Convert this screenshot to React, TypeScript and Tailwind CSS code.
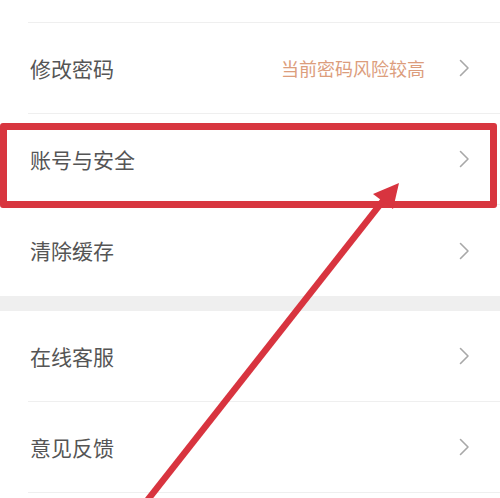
import React from 'react';

const font = { fontFamily: '"Noto Sans CJK SC", "Noto Sans", sans-serif' };

const Chevron = () => (
    <svg width="11" height="18" viewBox="0 0 11 18" fill="none" className="shrink-0">
        <path d="M1.5 1.5 L9 9 L1.5 16.5" stroke="#a8a8a8" strokeWidth="1.6" strokeLinecap="round" strokeLinejoin="round" />
    </svg>
);

const Divider = () => <div className="h-px ml-[28px] bg-[#efefef]" />;

interface RowProps {
    label: string;
    hint?: string;
    divider?: boolean;
}

const Row: React.FC<RowProps> = ({ label, hint, divider = true }) => (
    <div className="flex flex-col">
        <div className={`${divider ? 'h-[90px]' : 'h-[91px]'} flex items-center pl-[30px] pr-[30px]`}>
            <span className="text-[21px] text-[#555555] flex-1 leading-none">{label}</span>
            {hint && <span className="text-[18px] text-[#dc9d7c] mr-[34px] leading-none">{hint}</span>}
            <Chevron />
        </div>
        {divider && <Divider />}
    </div>
);

export default function App() {
    return (
        <div className="relative w-[500px] h-[498px] overflow-hidden bg-white" style={font}>
            <div className="flex flex-col">
                <div className="h-[22px]" />
                <Divider />
                <Row label="修改密码" hint="当前密码风险较高" />
                <Row label="账号与安全" />
                <Row label="清除缓存" divider={false} />
                <div className="h-[15px] bg-[#efefef]" />
                <Row label="在线客服" />
                <Row label="意见反馈" />
            </div>

            {/* annotation: highlight box */}
            <div className="absolute left-0 top-[123px] w-[497px] h-[85px] border-[7px] border-[#d8363f] rounded-[3px]" />

            {/* annotation: arrow */}
            <svg className="absolute inset-0" width="500" height="498" viewBox="0 0 500 498">
                <line x1="146" y1="502" x2="386" y2="197" stroke="#d8343f" strokeWidth="6.5" />
                <polygon points="399,183 373,194 393,209" fill="#d8343f" />
            </svg>
        </div>
    );
}
